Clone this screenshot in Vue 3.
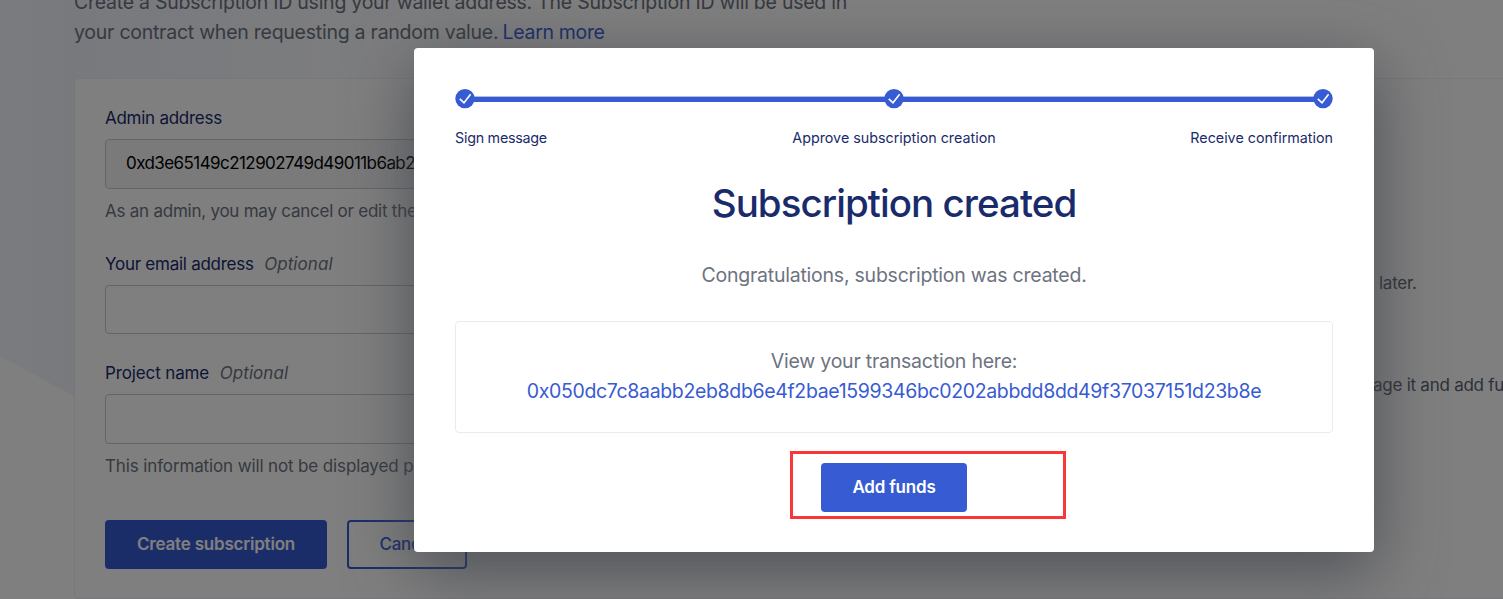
<script setup>
const steps = [
  { key: 'sign', label: 'Sign message' },
  { key: 'approve', label: 'Approve subscription creation' },
  { key: 'receive', label: 'Receive confirmation' },
]
const adminAddress = '0xd3e65149c212902749d49011b6ab2'
const txHash = '0x050dc7c8aabb2eb8db6e4f2bae1599346bc0202abbdd8dd49f37037151d23b8e'
</script>

<template>
  <div class="screen">
    <main class="page">
      <div class="backdrop-shape"></div>
      <p class="intro">
        Create a Subscription ID using your wallet address. The Subscription ID will be used in<br />
        your contract when requesting a random value. <a class="learn">Learn more</a>
      </p>
      <div class="card">
        <form class="form">
          <label class="label">Admin address</label>
          <div class="input disabled"><span>{{ adminAddress }}</span></div>
          <p class="help">As an admin, you may cancel or edit the</p>
          <label class="label email">Your email address <i>Optional</i></label>
          <div class="input short"></div>
          <label class="label project">Project name <i>Optional</i></label>
          <div class="input"></div>
          <p class="help info">This information will not be displayed p</p>
          <div class="actions">
            <div class="btn primary">Create subscription</div>
            <div class="btn outline">Cancel</div>
          </div>
        </form>
        <aside class="notes">
          <p class="later">later.</p>
          <p class="manage">age it and add fu</p>
        </aside>
      </div>
    </main>

    <div class="overlay">
      <section class="modal">
        <div class="stepper">
          <template v-for="(step, i) in steps" :key="step.key">
            <span v-if="i" class="track"></span>
            <svg class="dot" viewBox="0 0 20 20">
              <circle cx="10" cy="9.6" r="9.7" fill="#375bd2" />
              <path d="M4.8 9.8 9 13.8 15.6 5.2" fill="none" stroke="#fff" stroke-width="1.6" />
            </svg>
          </template>
        </div>
        <div class="step-labels">
          <span v-for="step in steps" :key="step.key" :class="step.key">{{ step.label }}</span>
        </div>
        <h1 class="title">Subscription created</h1>
        <p class="lead">Congratulations, subscription was created.</p>
        <div class="tx">
          <p>View your transaction here:</p>
          <a class="hash">{{ txHash }}</a>
        </div>
        <div class="btn primary add">Add funds</div>
      </section>
      <span class="marker"></span>
    </div>
  </div>
</template>

<style>
body { margin: 0; overflow: hidden; background: #fff; }
</style>

<style scoped>
* { box-sizing: border-box; }
p, h1 { margin: 0; }
.screen {
  position: relative;
  width: 1503px;
  height: 599px;
  overflow: hidden;
  font-family: Inter, "Liberation Sans", sans-serif;
  white-space: nowrap;
}
.page { position: relative; display: flow-root; height: 599px; }
.backdrop-shape {
  position: absolute;
  inset: 0 auto auto 0;
  width: 740px;
  height: 760px;
  background: linear-gradient(90deg, #f5f7fd 0, #f1f3fb 75px, #fbfcfe 420px, #fff 700px);
  clip-path: polygon(0 0, 100% 0, 100% 100%, 0 356px);
}
.intro {
  position: relative;
  height: 91px;
  margin-top: -13px;
  padding-left: 74px;
  font-size: 19.5px;
  line-height: 30px;
  letter-spacing: -0.25px;
  color: #6d7380;
}
.learn { margin-left: -1px; color: #375bd2; letter-spacing: -0.33px; }
.card {
  position: relative;
  display: flex;
  width: 1500px;
  height: 521px;
  margin-left: 74px;
  border: 1px solid #f0f1f4;
  border-radius: 4px;
  background: #fff;
}
.form { width: 1268px; padding: 27px 0 0 30px; }
.label {
  display: block;
  height: 24px;
  margin-bottom: 9px;
  font-size: 17px;
  line-height: 24px;
  letter-spacing: -0.26px;
  color: #1a2b6b;
}
.label i { margin-left: 6px; letter-spacing: 0.05px; color: #6d7380; }
.label.email { margin-top: 29px; }
.label.project { margin-top: 27px; letter-spacing: -0.13px; }
.input {
  width: 600px;
  height: 50px;
  padding-left: 20px;
  border: 1px solid #c6c8cc;
  border-radius: 4px;
  font-size: 17px;
  line-height: 47px;
  letter-spacing: -0.57px;
  color: #000;
}
.input.short { height: 49px; }
.input.disabled { background: #f5f5f6; }
.help {
  margin-top: 10px;
  font-size: 17px;
  line-height: 24px;
  letter-spacing: -0.24px;
  color: #6d7380;
}
.help.info { letter-spacing: -0.13px; }
.actions { display: flex; gap: 20px; margin-top: 42px; }
.btn {
  height: 49px;
  border-radius: 4px;
  font-size: 17px;
  font-weight: 600;
  line-height: 49px;
  letter-spacing: -0.2px;
  text-align: center;
}
.btn.primary { width: 222px; background: #375bd2; color: #fff; }
.btn.outline {
  width: 120px;
  border: 2px solid #375bd2;
  line-height: 45px;
  font-weight: 500;
  color: #375bd2;
}
.notes { padding-top: 192px; font-size: 17px; line-height: 24px; letter-spacing: -0.25px; color: #5c6270; }
.later { padding-left: 36px; }
.manage { margin-top: 78px; padding-left: 30px; }
.overlay { position: absolute; inset: 0; background: rgba(0, 0, 0, 0.5); }
.modal {
  position: absolute;
  top: 50%;
  left: 414px;
  width: 960px;
  height: 504px;
  padding: 41px;
  transform: translateY(-50%);
  border-radius: 4px;
  background: #fff;
  box-shadow: 0 18px 66px rgba(66, 69, 76, 0.8);
}
.stepper { display: flex; align-items: center; height: 20px; }
.dot { flex: none; width: 20px; height: 20px; overflow: visible; }
.track { flex: 1; height: 5px; margin-top: 1px; margin-inline: -1px; background: #375bd2; box-shadow: 0 -1px 0 rgba(55, 91, 210, 0.4); }
.step-labels {
  display: grid;
  grid-template-columns: 1fr auto 1fr;
  margin-top: 19px;
  font-size: 14.3px;
  line-height: 20px;
  color: #1a2b6b;
}
.sign { letter-spacing: -0.25px; }
.receive { text-align: right; }
.title {
  margin-top: 30px;
  font-size: 38.5px;
  font-weight: 500;
  line-height: 50px;
  letter-spacing: -0.95px;
  text-align: center;
  color: #1a2b6b;
}
.lead, .tx {
  font-size: 19.5px;
  line-height: 30px;
  letter-spacing: -0.23px;
  text-align: center;
  color: #6d7380;
}
.lead { margin-top: 32px; }
.tx {
  height: 112px;
  margin-top: 31px;
  padding-top: 24px;
  border: 1px solid #eaebee;
  border-radius: 4px;
}
.hash { display: block; letter-spacing: -0.35px; color: #375bd2; }
.btn.add { width: 146px; margin: 30px auto 0; }
.marker {
  position: absolute;
  top: 451px;
  left: 790px;
  width: 276px;
  height: 68px;
  border: 3px solid #fb3636;
}
</style>
